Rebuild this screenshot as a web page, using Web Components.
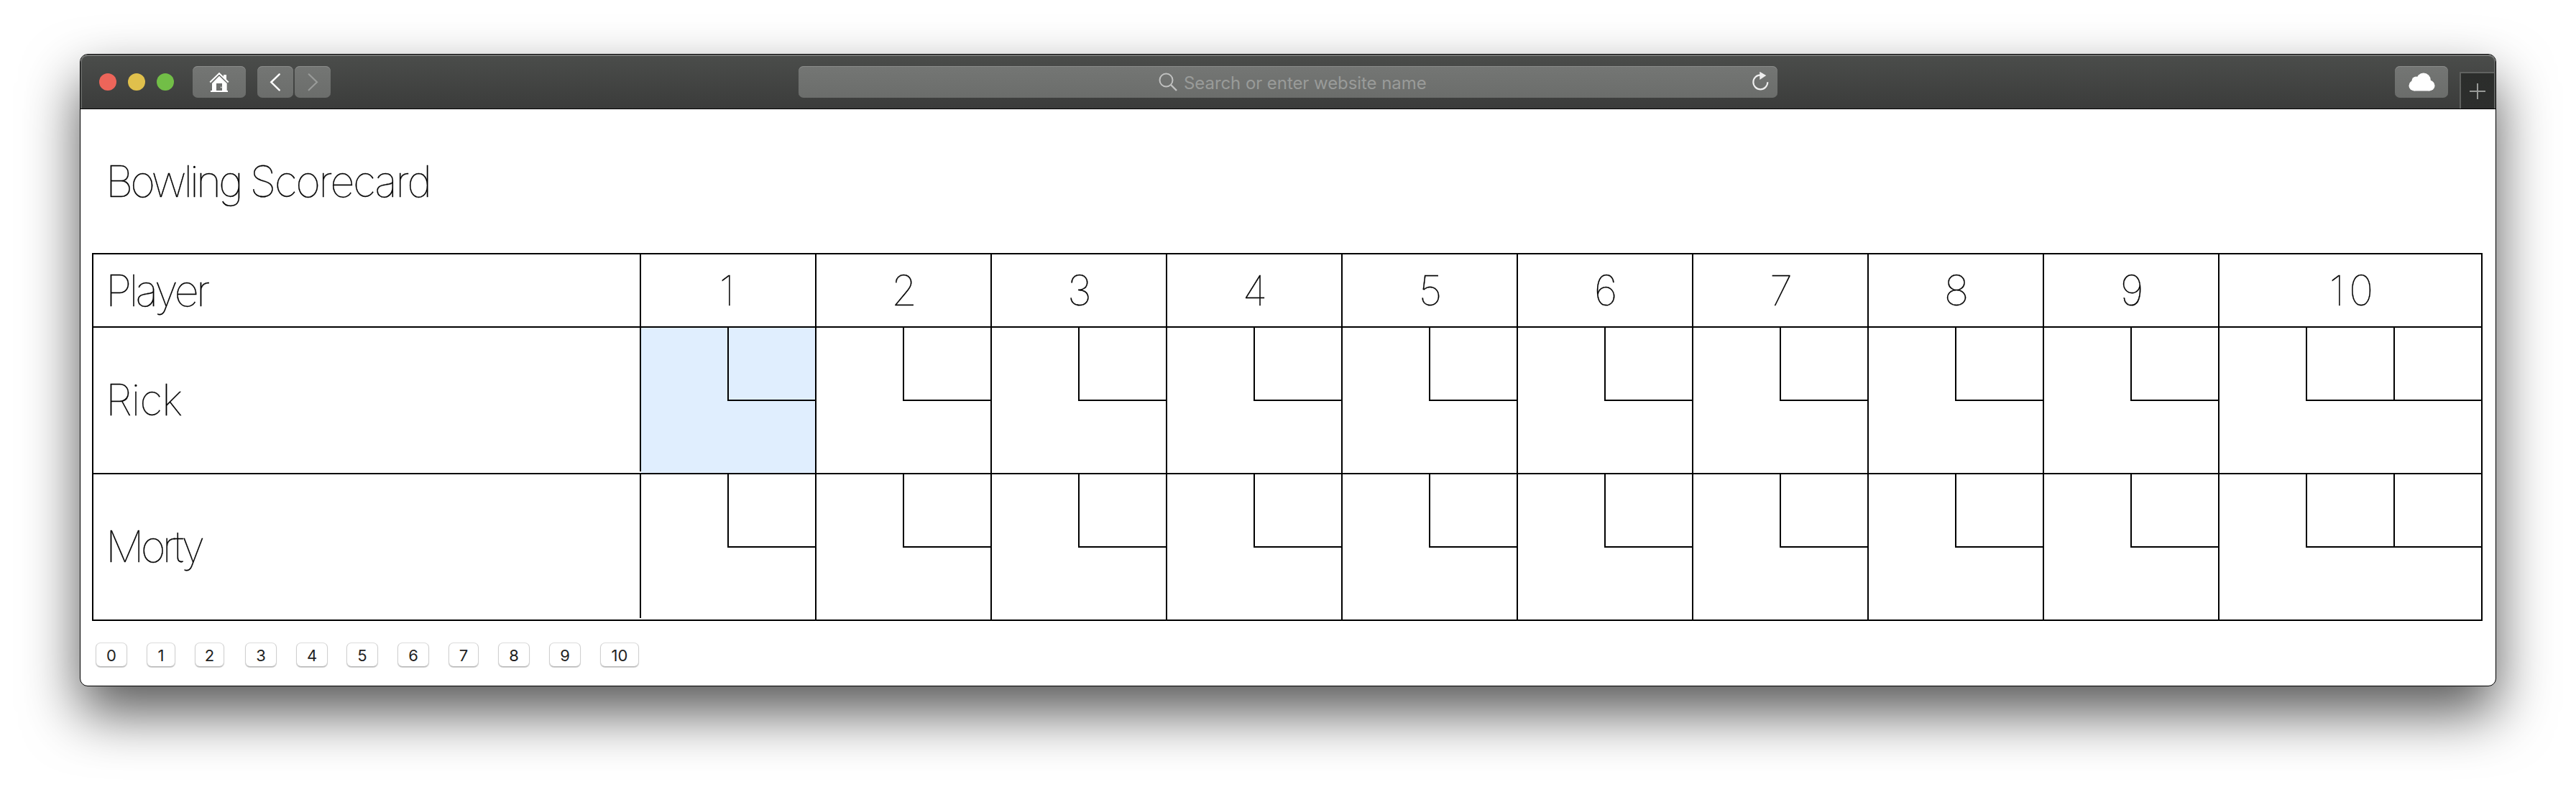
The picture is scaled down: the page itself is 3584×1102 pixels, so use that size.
<!DOCTYPE html>
<html lang="en">
<head>
<meta charset="utf-8">
<title>Bowling Scorecard</title>
<style>
html,body{margin:0;background:#fff}
body{width:3584px;height:1102px;overflow:hidden;box-sizing:border-box;padding:75px 111px}
</style>
</head>
<body>
<browser-window>
  <browser-toolbar slot="toolbar"></browser-toolbar>
  <bowling-scorecard players="Rick,Morty"></bowling-scorecard>
  <pin-buttons></pin-buttons>
</browser-window>
<script>
const define = (name, html, setup) => customElements.define(name, class extends HTMLElement {
  constructor() {
    super();
    const t = document.createElement('template');
    t.innerHTML = html;
    this.attachShadow({mode: 'open'}).append(t.content.cloneNode(true));
  }
  connectedCallback() { if (setup) setup(this.shadowRoot, this); }
});

define('browser-window', `
<style>
:host{display:flex;flex-direction:column;box-sizing:border-box;width:3362px;height:880px;border:1px solid #000;border-radius:11px;overflow:hidden;background:#fff;box-shadow:0 37px 78px rgba(0,0,0,.66)}
main{padding:0 16px}
</style>
<slot name="toolbar"></slot><main><slot></slot></main>`);

define('tool-button', `
<style>
:host{display:flex;align-items:center;justify-content:center;width:74px;height:44px;border-radius:7px;background:linear-gradient(#747674,#6b6d6b);box-shadow:inset 0 1px 0 #8b8d8b}
:host([narrow]){width:50px}
</style><slot></slot>`);

define('address-bar', `
<style>
:host{display:flex;align-items:center;box-sizing:border-box;width:1362px;height:44px;padding:0 10.7px 0 501px;border-radius:7px;background:linear-gradient(#747674,#6b6d6b);box-shadow:inset 0 1px 0 #8b8d8b;font:24px Inter,sans-serif;color:#999b99}
span{margin-left:9px;white-space:nowrap;letter-spacing:-.07px;padding-top:2px}
.reload{margin-left:auto}
svg{flex:none;display:block}
</style>
<svg width="26" height="26" viewBox="0 0 26 26" fill="none" stroke="#c0c1c0" stroke-width="2"><circle cx="10.5" cy="10.5" r="9"/><path d="M17 17l8 8" stroke-width="2.4"/></svg>
<span>Search or enter website name</span>
<svg class="reload" width="25.3" height="29.3" viewBox="170 88 76 88"><path d="M237 134a30 30 0 1 1-30-30" fill="none" stroke="#eee" stroke-width="6.5"/><path d="M204 90v34l27-18z" fill="#eee"/></svg>`);

define('browser-toolbar', `
<style>
:host{display:flex;position:relative;box-sizing:border-box;height:76px;padding:16px 0 0 26px;background:linear-gradient(#4b4d4b,#3b3c3b);border-bottom:1px solid #000;box-shadow:inset 0 2px 0 #737573,inset 2px 0 0 #5f615f,inset -2px 0 0 #5f615f;border-radius:10px 10px 0 0}
.lights{display:flex;gap:16px;padding-top:10px;margin-right:26px}
i{width:24px;height:24px;border-radius:50%}
.nav{display:flex;gap:2px;margin-left:16px}
address-bar{margin-left:651px}
.cloud{margin-left:859px}
.tab{box-sizing:border-box;width:50px;height:51px;margin:8px 0 0 16px;border:2px solid #606260;border-bottom:0;background:linear-gradient(#2b2d2b,#2d2e2d);display:flex;padding:14px 0 0 12px}
</style>
<div class="lights"><i style="background:#ed655a"></i><i style="background:#e0c04c"></i><i style="background:#72be47"></i></div>
<tool-button><svg width="30" height="32" viewBox="600 114 90 96"><path d="M607 164l38-37 38 37" fill="none" stroke="#fff" stroke-width="7"/><path d="M663 132h12v24l-12-11zM645 137l32 31v30h4v6h-72v-6h6v-30zM633 168v30h24v-30z" fill="#fff" fill-rule="evenodd"/><path d="M607 169l38-37 38 37" fill="none" stroke="#6f716f" stroke-width="3"/><path d="M651 182h4v5h-4z" fill="#fff"/></svg></tool-button>
<div class="nav">
<tool-button narrow><svg width="20" height="26.67" viewBox="849 122 60 80"><path d="M896 129l-34 33 34 33" fill="none" stroke="#fff" stroke-width="7.5" stroke-linecap="round"/></svg></tool-button>
<tool-button narrow><svg width="20" height="26.67" viewBox="1005 122 60 80"><path d="M1019 129l34 33-34 33" fill="none" stroke="#999b99" stroke-width="6.5" stroke-linecap="round"/></svg></tool-button>
</div>
<address-bar></address-bar>
<tool-button class="cloud"><svg width="37" height="27" viewBox="211.500 121.500 111 81" fill="#fff"><circle cx="235" cy="176" r="22"/><circle cx="243" cy="156" r="18"/><circle cx="274" cy="153" r="30"/><circle cx="299" cy="176" r="22"/><path d="M235 160h64v38h-64z"/></svg></tool-button>
<div class="tab"><svg width="22" height="22"><path d="M11 0v22M0 11h22" stroke="#979997" stroke-width="2"/></svg></div>`);

define('score-frame', `
<style>
:host{display:flex;justify-content:flex-end;align-items:flex-start;box-sizing:border-box;width:244px;height:202px;border-right:2px solid #000}
:host([last]){width:366px}
:host([active]){background:#e0eefe}
i{box-sizing:border-box;width:122px;height:102px;border:solid #000;border-width:0 0 2px 2px}
.b{display:none}
:host([last]) .b{display:block}
</style><i></i><i class="b"></i>`);

define('bowling-scorecard', `
<style>
:host{display:block;font:100 60px Inter,sans-serif;color:#000;-webkit-text-stroke:.3px #000}
h1{margin:0;padding-left:19px;height:200px;line-height:200px;font:inherit;line-height:200px}
h1,.name{font-size:60px;letter-spacing:-4.1px;white-space:nowrap}
h1 span{letter-spacing:-2.55px}
.table{box-sizing:border-box;width:3326px;border:solid #000;border-width:2px 0 0 2px}
.row{display:flex;border-bottom:2px solid #000;height:202px}
.head{height:100px}
.name{box-sizing:border-box;width:762px;height:200px;padding-left:17px;border-right:2px solid #000;line-height:200px}
.head .name{height:100px;line-height:101px}
.num{box-sizing:border-box;width:244px;border-right:2px solid #000;text-align:center;line-height:101px;font-size:58px;padding-left:2px}
.num:nth-child(2){padding:0 3px 0 0}
.num.last{width:366px;letter-spacing:6px;padding-left:9px}
</style>
<h1>Bowling <span>Scorecard</span></h1>
<div class="table"></div>`, (root, el) => {
  const tracking = {Player: -3.9, Rick: -1.3, Morty: -4.8};
  const name = p => `<div class="name" style="letter-spacing:${tracking[p]}px">${p}</div>`;
  const frames = [...Array(10).keys()];
  const head = '<div class="row head">' + name('Player') + frames.map(i => `<div class="num${i === 9 ? ' last' : ''}">${i + 1}</div>`).join('') + '</div>';
  const rows = el.getAttribute('players').split(',').map((p, r) =>
    `<div class="row">${name(p)}` + frames.map(i => `<score-frame${i === 9 ? ' last' : ''}${!r && !i ? ' active' : ''}></score-frame>`).join('') + '</div>').join('');
  root.querySelector('.table').innerHTML = head + rows;
});

define('pin-button', `
<style>
:host{display:block}
button{display:block;box-sizing:border-box;width:var(--w);height:34px;margin:0;padding:0;border:1px solid #d0d0d0;border-top-color:#dcdcdc;border-bottom-color:#b8b8b8;border-radius:7px;background:#fff;box-shadow:0 1px 1px rgba(0,0,0,.2);font:22px/34px Inter,sans-serif;color:#222;text-align:center}
</style><button><slot></slot></button>`);

define('pin-buttons', `
<style>:host{display:flex;padding:30px 0 0 5px}</style>`, root => {
  const x = [133,204,271,341,412,482,553,624,693,764,835], w = [44,40,41,44,44,44,44,42,44,44,54];
  x.forEach((v, i) => {
    const b = document.createElement('pin-button');
    b.textContent = i;
    b.style.setProperty('--w', w[i] + 'px');
    if (i) b.style.marginLeft = v - x[i-1] - w[i-1] + 'px';
    root.append(b);
  });
});
</script>
</body>
</html>
